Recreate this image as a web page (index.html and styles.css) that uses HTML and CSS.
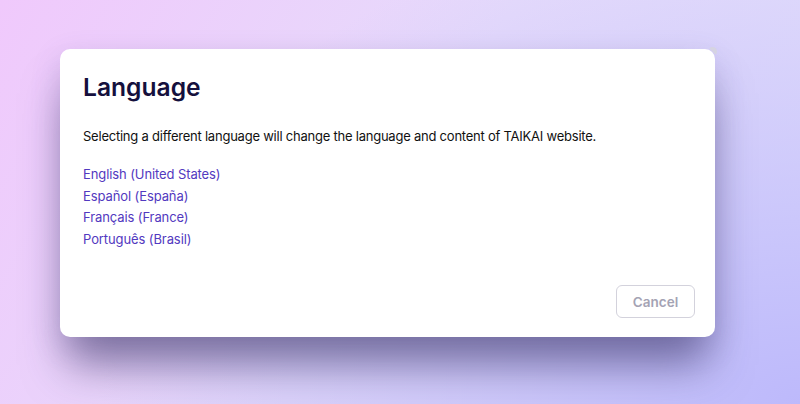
FILE: index.html
```html
<!DOCTYPE html>
<html lang="en">
<head>
<meta charset="utf-8">
<title>Language</title>
<link rel="stylesheet" href="styles.css">
</head>
<body>
<div class="backdrop">
  <div class="modal">
    <span class="corner"></span>
    <h1 class="title">Language</h1>
    <p class="desc">Selecting a different language will change the language and content of TAIKAI website.</p>
    <ul class="langs">
      <li><a href="#">English (United States)</a></li>
      <li><a href="#">Español (España)</a></li>
      <li><a href="#">Français (France)</a></li>
      <li><a href="#">Português (Brasil)</a></li>
    </ul>
    <div class="actions">
      <button class="cancel" type="button">Cancel</button>
    </div>
  </div>
</div>
</body>
</html>
```

FILE: styles.css
```css
* { box-sizing: border-box; }
html, body { margin: 0; padding: 0; }
body {
  width: 800px;
  height: 404px;
  overflow: hidden;
  font-family: "Inter", "Noto Sans", sans-serif;
}
.backdrop {
  width: 800px;
  height: 404px;
  padding: 49px 0 0 60px;
  background:
    radial-gradient(ellipse 700px 500px at 800px 404px, #bdb9fb 0%, rgba(189,185,251,0) 100%),
    linear-gradient(120deg, #f0c9fc 0%, #e6dbfb 50%, #e2e0fb 100%);
}
.modal {
  position: relative;
  width: 655px;
  height: 288px;
  background: #fff;
  border-radius: 10px;
  padding: 23px 20px 19px 23px;
  display: flex;
  flex-direction: column;
  box-shadow: 0 36px 44px -8px rgba(55, 50, 100, 0.55), 0 10px 30px rgba(90, 80, 150, 0.2);
}
.corner {
  position: absolute;
  top: -2px;
  right: -2px;
  width: 9px;
  height: 9px;
  border-radius: 50%;
  background: #d6d4e2;
  clip-path: polygon(0 0, 100% 0, 100% 100%);
}
.title {
  margin: 0;
  font-size: 24.6px;
  font-weight: 600;
  line-height: 30px;
  color: #15103d;
}
.desc {
  margin: 24px 0 0;
  font-size: 13px;
  line-height: 20px;
  color: #111;
  letter-spacing: -0.23px;
}
.langs {
  list-style: none;
  margin: 18px 0 0;
  padding: 0;
  display: flex;
  flex-direction: column;
}
.langs li {
  line-height: 21.5px;
  font-size: 13px;
  letter-spacing: -0.1px;
}
.langs a {
  color: #5239c0;
  text-decoration: none;
}
.actions {
  margin-top: auto;
  display: flex;
  justify-content: flex-end;
}
.cancel {
  width: 79px;
  height: 33px;
  border: 1.5px solid #d3d2dc;
  border-radius: 6px;
  background: #fff;
  color: #a4a3b4;
  font-family: inherit;
  font-size: 13.5px;
  font-weight: 600;
}
```
